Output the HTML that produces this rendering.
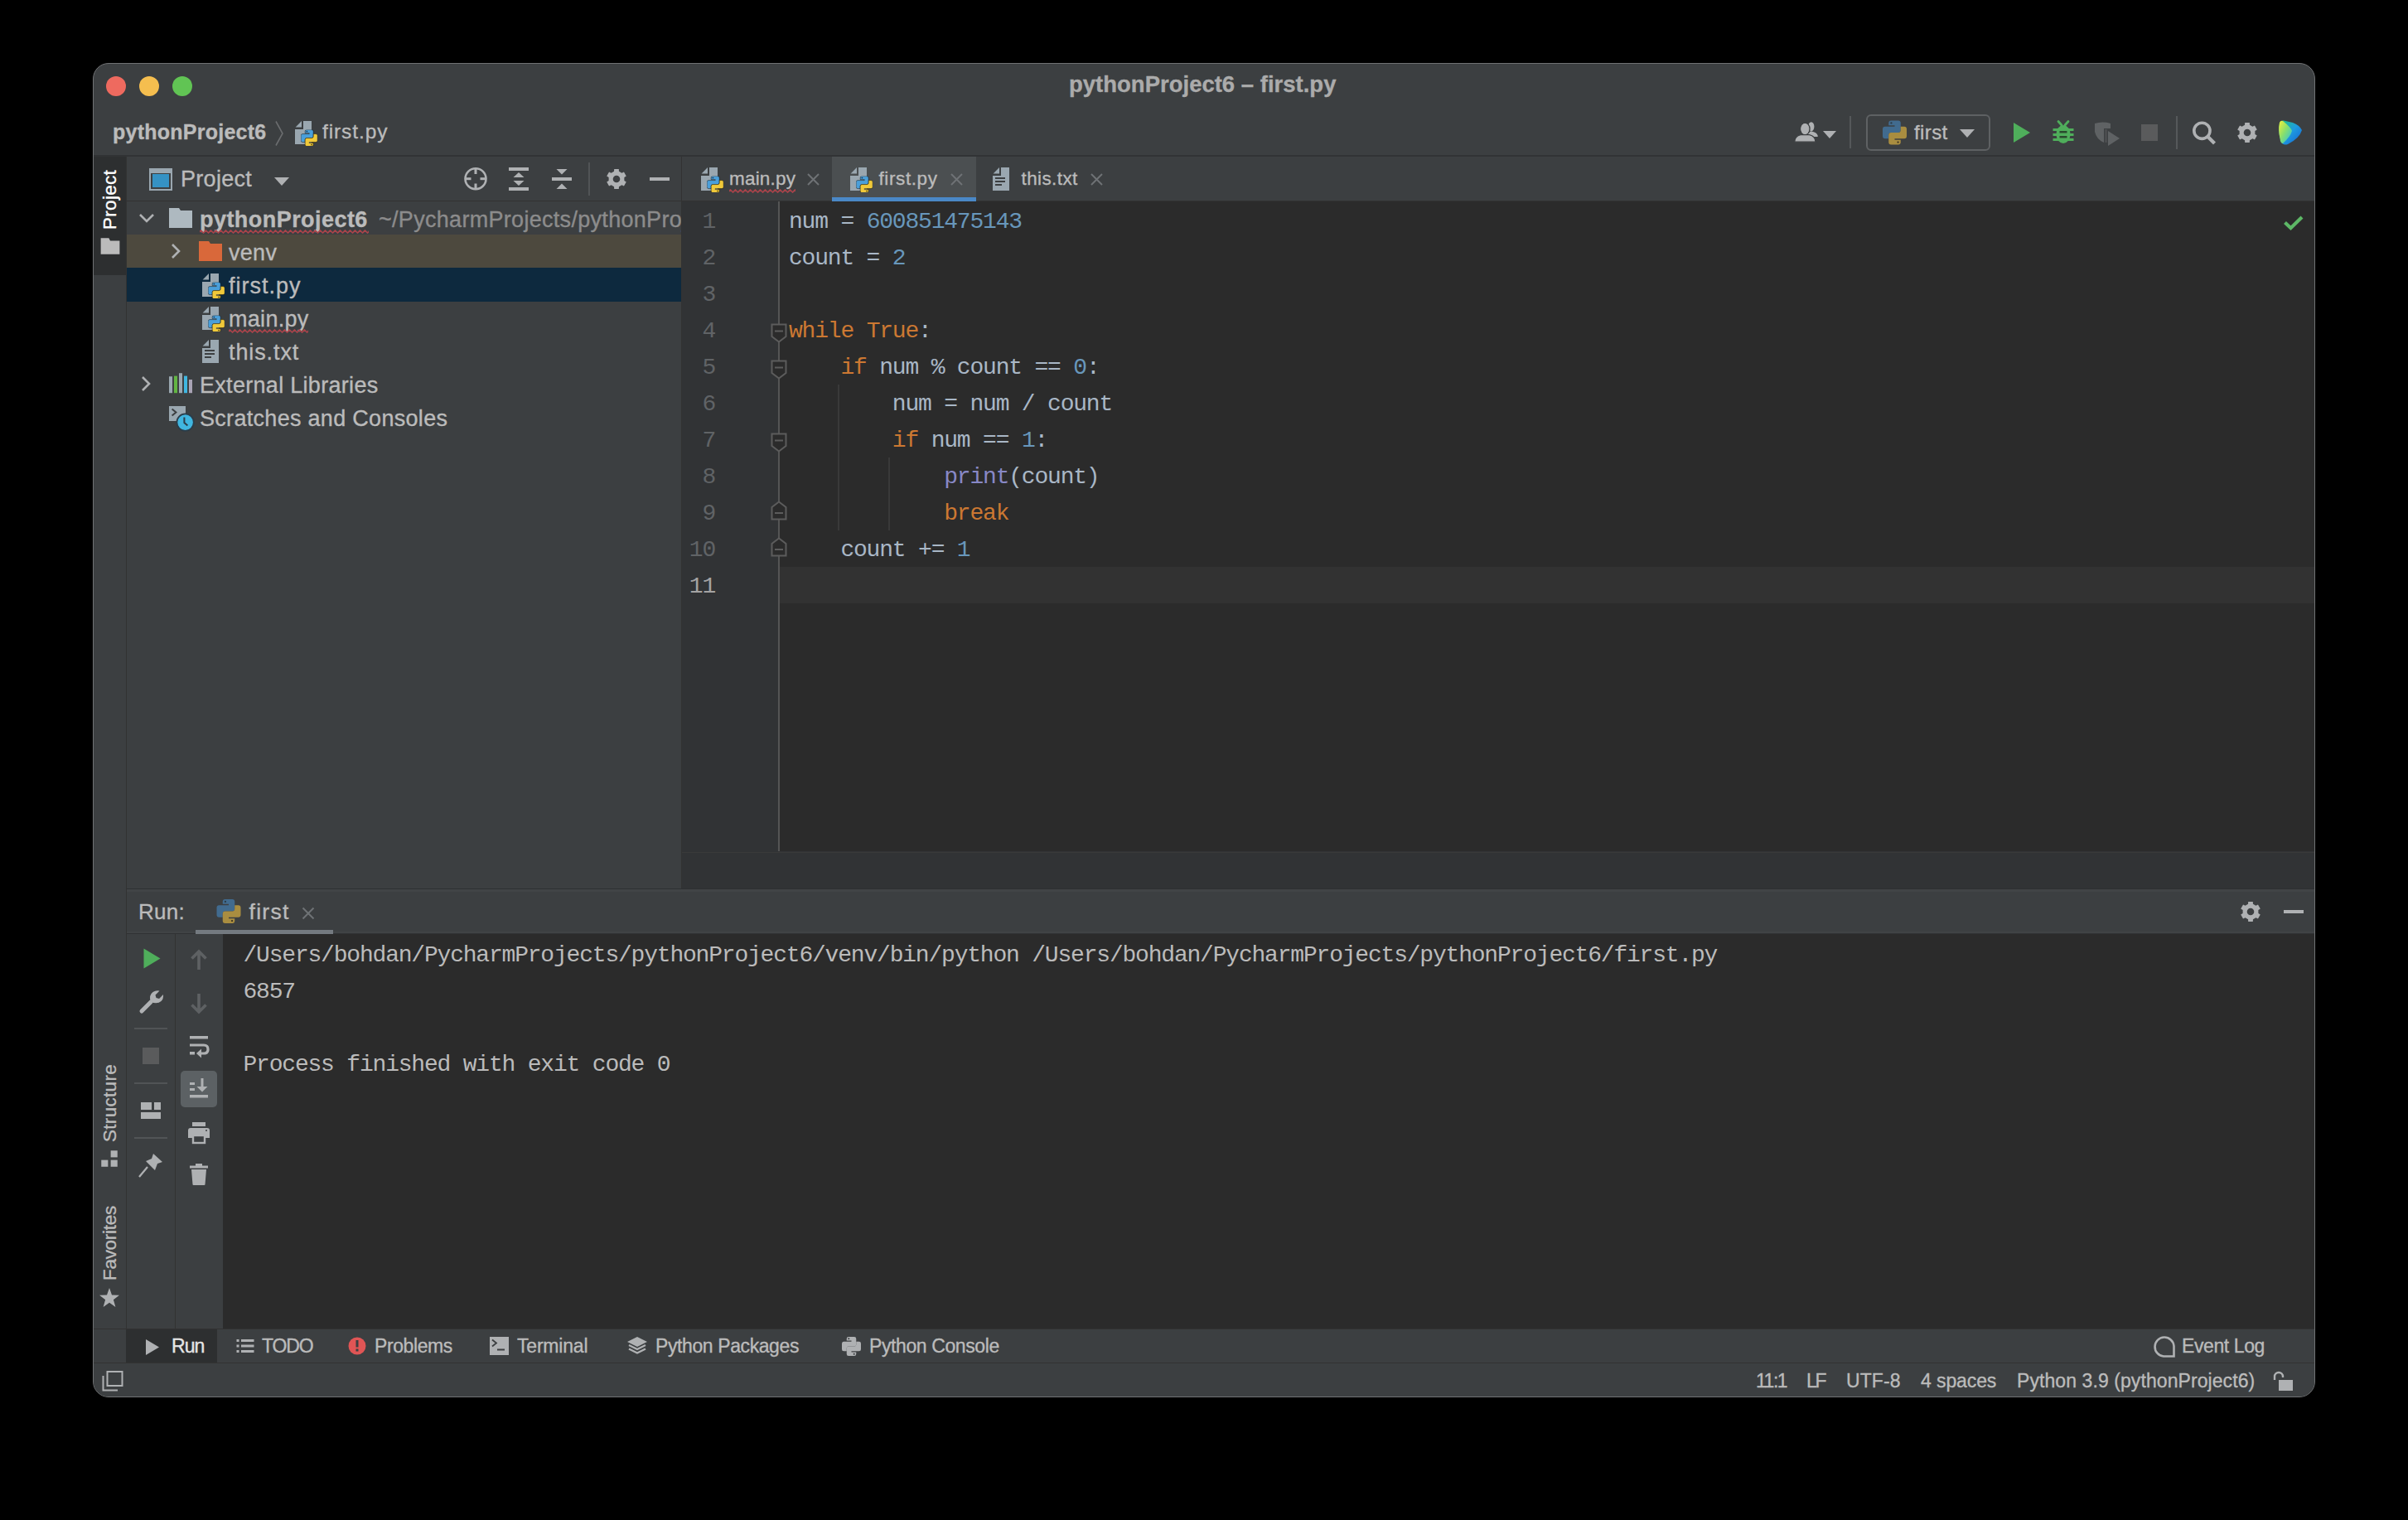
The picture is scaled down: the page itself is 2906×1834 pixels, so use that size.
<!DOCTYPE html>
<html><head><meta charset="utf-8">
<style>
*{box-sizing:border-box;margin:0;padding:0}
html,body{width:2906px;height:1834px;background:#000;overflow:hidden}
body{font-family:"Liberation Sans",sans-serif;color:#BBBBBB;position:relative}
.t{-webkit-text-stroke:0.35px currentColor}
.a{position:absolute}
.t{position:absolute;white-space:pre;line-height:1}
.m{position:absolute;white-space:pre;line-height:1;font-family:"Liberation Mono",monospace;font-size:26px}
#win{position:absolute;left:112px;top:76px;width:2682px;height:1610px;border-radius:19px;background:#3C3F41;overflow:hidden;border:1px solid #707274}
#pg{position:absolute;left:-113px;top:-77px;width:2906px;height:1834px}
svg{position:absolute;overflow:visible}
</style></head><body>
<svg width="0" height="0" style="position:absolute">
<defs>

<symbol id="fs" viewBox="0 0 20 24"><path d="M1.5,1.5 H18.5 V16 L10,22.5 L1.5,16 Z" fill="#2B2B2B" stroke="#5C5C5C" stroke-width="2"/><rect x="5" y="8.5" width="10" height="2" fill="#5C5C5C"/></symbol>
<symbol id="fe" viewBox="0 0 20 24"><path d="M1.5,22.5 H18.5 V8 L10,1.5 L1.5,8 Z" fill="#2B2B2B" stroke="#5C5C5C" stroke-width="2"/><rect x="5" y="14" width="10" height="2" fill="#5C5C5C"/></symbol>

<symbol id="gear" viewBox="0 0 32 32"><path fill="#AFB1B3" fill-rule="evenodd" d="M13.03,6.87 L13.19,4.02 L18.81,4.02 L18.97,6.87 L22.42,8.87 L24.97,7.58 L27.78,12.44 L25.39,14.00 L25.39,18.00 L27.78,19.56 L24.97,24.42 L22.42,23.13 L18.97,25.13 L18.81,27.98 L13.19,27.98 L13.03,25.13 L9.58,23.13 L7.03,24.42 L4.22,19.56 L6.61,18.00 L6.61,14.00 L4.22,12.44 L7.03,7.58 L9.58,8.87 Z M20.30,16.00 A4.3,4.3 0 1 0 11.70,16.00 A4.3,4.3 0 1 0 20.30,16.00 Z"/></symbol>

<symbol id="py" viewBox="0 0 10 10"><path fill="#4A9FDA" stroke="rgba(0,0,0,.45)" stroke-width=".5" d="M2.5,1 Q2.5,0 3.5,0 H6.5 Q7.5,0 7.5,1 V4 Q7.5,5 6.5,5 H3.5 Q2.5,5 2.5,6 V7.5 H1 Q0,7.5 0,6.5 V3.5 Q0,2.5 1,2.5 H5 V2 H2.5 Z"/><path fill="#F0C93A" stroke="rgba(0,0,0,.45)" stroke-width=".5" d="M7.5,9 Q7.5,10 6.5,10 H3.5 Q2.5,10 2.5,9 V6 Q2.5,5 3.5,5 H6.5 Q7.5,5 7.5,4 V2.5 H9 Q10,2.5 10,3.5 V6.5 Q10,7.5 9,7.5 H5 V8 H7.5 Z"/><circle cx="3.6" cy="1" r=".45" fill="#1d3b57"/><circle cx="6.4" cy="9" r=".45" fill="#5a4a10"/></symbol>
<symbol id="pyfile" viewBox="0 0 16 16"><path fill="#9AA7B0" d="M1.3,4.7 L5,1 V4.7 Z M6,1 H11 V15 H1 V6 H6 Z"/><use href="#py" x="4.6" y="6.3" width="10" height="10"/></symbol>
<symbol id="txtfile" viewBox="0 0 16 16"><path fill="#9AA7B0" d="M1.3,4.7 L5,1 V4.7 Z M6,1 H11 V15 H1 V6 H6 Z"/><rect x="2.5" y="7" width="6" height="1" fill="#3C3F41"/><rect x="2.5" y="9" width="6" height="1" fill="#3C3F41"/><rect x="2.5" y="11" width="4" height="1" fill="#3C3F41"/></symbol>
<symbol id="folder" viewBox="0 0 16 16"><path fill="#AEB9C0" d="M1,2 H7 L8,3.5 H15 V14 H1 Z"/></symbol>
<symbol id="folderO" viewBox="0 0 16 16"><path fill="#D9683A" d="M1,2 H7 L8,3.5 H15 V14 H1 Z"/></symbol>
<pattern id="wave" width="6" height="5" patternUnits="userSpaceOnUse"><path d="M-1.5,4 L1.5,1 L4.5,4 L7.5,1" stroke="#A8434A" fill="none" stroke-width="1.6"/></pattern>
<symbol id="chevR" viewBox="0 0 16 16"><path fill="none" stroke="#AFB1B3" stroke-width="1.3" d="M6,4 L10,8 L6,12"/></symbol>
<symbol id="chevD" viewBox="0 0 16 16"><path fill="none" stroke="#AFB1B3" stroke-width="1.3" d="M4,6 L8,10 L12,6"/></symbol>
</defs>
</svg>
<div id="win"><div id="pg">
<!-- nav bar bottom border -->
<div class="a" style="left:112px;top:187px;width:2684px;height:2px;background:#313335"></div>
<!-- left stripe -->
<div class="a" style="left:112px;top:189px;width:40px;height:1414px;background:#3C3F41"></div>
<div class="a" style="left:112px;top:189px;width:40px;height:143px;background:#2D2F30"></div>
<div class="a" style="left:152px;top:189px;width:1px;height:1414px;background:#323232"></div>
<!-- project panel -->
<div class="a" style="left:153px;top:189px;width:670px;height:883px;background:#3C3F41"></div>
<div class="a" style="left:153px;top:242px;width:670px;height:1px;background:#323232"></div>
<div class="a" style="left:153px;top:283px;width:670px;height:40px;background:#4D493E"></div>
<div class="a" style="left:153px;top:323px;width:670px;height:41px;background:#0D293E"></div>
<div class="a" style="left:822px;top:189px;width:1px;height:883px;background:#323232"></div>
<!-- editor tabs -->
<div class="a" style="left:823px;top:189px;width:1972px;height:54px;background:#3C3F41"></div>
<div class="a" style="left:1004px;top:189px;width:174px;height:54px;background:#4B4F51"></div>
<div class="a" style="left:1004px;top:238px;width:174px;height:5px;background:#4A88C7"></div>
<div class="a" style="left:823px;top:242px;width:181px;height:1px;background:#323232"></div>
<div class="a" style="left:1178px;top:242px;width:1617px;height:1px;background:#323232"></div>
<!-- editor -->
<div class="a" style="left:823px;top:243px;width:1972px;height:785px;background:#2B2B2B"></div>
<div class="a" style="left:823px;top:243px;width:117px;height:785px;background:#313335"></div>
<div class="a" style="left:940px;top:684px;width:1855px;height:44px;background:#323232"></div>
<div class="a" style="left:939px;top:243px;width:2px;height:785px;background:#555555"></div>
<!-- editor breadcrumbs strip -->
<div class="a" style="left:823px;top:1027px;width:1972px;height:45px;background:#313335"></div>
<div class="a" style="left:823px;top:1028px;width:1972px;height:1px;background:#3A3A3A"></div>
<!-- splitter -->
<div class="a" style="left:153px;top:1072px;width:2642px;height:1px;background:#2E3032"></div>
<div class="a" style="left:153px;top:1073px;width:2642px;height:3px;background:#414446"></div>
<!-- run panel header -->
<div class="a" style="left:153px;top:1076px;width:2642px;height:50px;background:#3C3F41"></div>
<div class="a" style="left:153px;top:1124px;width:2642px;height:2px;background:#404345"></div>
<div class="a" style="left:153px;top:1126px;width:2642px;height:1px;background:#303234"></div>
<div class="a" style="left:236px;top:1122px;width:166px;height:5px;background:#747A80"></div>
<!-- run toolbars -->
<div class="a" style="left:153px;top:1127px;width:116px;height:476px;background:#3C3F41"></div>
<div class="a" style="left:211px;top:1127px;width:1px;height:476px;background:#323232"></div>
<div class="a" style="left:269px;top:1127px;width:2526px;height:476px;background:#2B2B2B"></div>
<!-- bottom stripe -->
<div class="a" style="left:112px;top:1603px;width:2684px;height:1px;background:#323232"></div>
<div class="a" style="left:112px;top:1604px;width:2684px;height:40px;background:#3C3F41"></div>
<div class="a" style="left:152px;top:1604px;width:110px;height:40px;background:#2D2F30"></div>
<!-- status bar -->
<div class="a" style="left:112px;top:1644px;width:2684px;height:1px;background:#323232"></div>
<div class="a" style="left:112px;top:1645px;width:2684px;height:42px;background:#3C3F41"></div>

<div id="texts">

<!-- left stripe labels -->
<div class="t" style="left:122px;top:277px;font-size:22.5px;color:#FFFFFF;transform-origin:0 0;transform:rotate(-90deg);letter-spacing:0.3px">Project</div>
<svg style="left:120px;top:284px" width="26" height="26" viewBox="0 0 16 16"><path fill="#BBBBBB" d="M1,2 H7 L8,4 H15 V14 H1 Z"/></svg>
<div class="t" style="left:121.5px;top:1378px;font-size:22.5px;color:#BBBBBB;transform-origin:0 0;transform:rotate(-90deg);letter-spacing:0.3px">Structure</div>
<svg style="left:119px;top:1385px" width="26" height="26" viewBox="0 0 16 16"><rect x="9" y="2" width="5" height="5" fill="#AFB1B3"/><rect x="2" y="9" width="5" height="5" fill="#AFB1B3"/><rect x="9" y="9" width="5" height="5" fill="#AFB1B3"/></svg>
<div class="t" style="left:121.5px;top:1545px;font-size:22.5px;color:#BBBBBB;transform-origin:0 0;transform:rotate(-90deg);letter-spacing:-0.3px">Favorites</div>
<svg style="left:119px;top:1553px" width="26" height="26" viewBox="0 0 26 26"><path fill="#AFB1B3" d="M13,1 L16,9.5 L25,9.7 L17.9,15.2 L20.4,24 L13,18.8 L5.6,24 L8.1,15.2 L1,9.7 L10,9.5 Z"/></svg>
<!-- run header -->
<div class="t" style="left:167px;top:1087px;font-size:26px;letter-spacing:0.3px">Run:</div>
<svg style="left:261px;top:1085px" width="30" height="29" viewBox="0 0 10 10"><path fill="#416B8F" d="M2.5,1 Q2.5,0 3.5,0 H6.5 Q7.5,0 7.5,1 V4 Q7.5,5 6.5,5 H3.5 Q2.5,5 2.5,6 V7.5 H1 Q0,7.5 0,6.5 V3.5 Q0,2.5 1,2.5 H5 V2 H2.5 Z"/><path fill="#A98D40" d="M7.5,9 Q7.5,10 6.5,10 H3.5 Q2.5,10 2.5,9 V6 Q2.5,5 3.5,5 H6.5 Q7.5,5 7.5,4 V2.5 H9 Q10,2.5 10,3.5 V6.5 Q10,7.5 9,7.5 H5 V8 H7.5 Z"/><circle cx="3.6" cy="1" r=".4" fill="#2b3b48"/><circle cx="6.4" cy="9" r=".4" fill="#3a3220"/></svg>
<div class="t" style="left:300.5px;top:1087px;font-size:26.5px;letter-spacing:1.3px">first</div>
<svg style="left:364px;top:1094px" width="16" height="16" viewBox="0 0 16 16"><path d="M1.5,1.5 L14.5,14.5 M14.5,1.5 L1.5,14.5" stroke="#6E7275" stroke-width="2"/></svg>
<svg style="left:2700px;top:1084px" width="32" height="32"><use href="#gear"/></svg>
<div class="a" style="left:2756px;top:1098px;width:24px;height:4px;background:#AFB1B3"></div>
<!-- run toolbar col1 -->
<svg style="left:173px;top:1144px" width="21" height="25" viewBox="0 0 21 25"><path d="M0.5,0.5 L20.5,12.5 L0.5,24.5 Z" fill="#4FAE5B"/></svg>
<svg style="left:168px;top:1192px" width="30" height="32" viewBox="0 0 30 32"><path d="M3,28 L14,17" stroke="#AFB1B3" stroke-width="5" stroke-linecap="round"/><path d="M14,17 Q11,9 16.5,5 Q20,2.5 24.5,3.5 L19.5,8.5 L20.5,12 L24,13 L29,8 Q29.5,13 26.5,16 Q22,20 14,17 Z" fill="#AFB1B3"/></svg>
<div class="a" style="left:162px;top:1240px;width:40px;height:2px;background:#515456"></div>
<div class="a" style="left:172px;top:1264px;width:20px;height:20px;background:#5A5B5C"></div>
<div class="a" style="left:162px;top:1306px;width:40px;height:2px;background:#515456"></div>
<svg style="left:169px;top:1329px" width="26" height="22" viewBox="0 0 26 22"><rect x="1" y="1" width="13" height="9" fill="#AFB1B3"/><rect x="17" y="1" width="8" height="9" fill="#AFB1B3"/><rect x="1" y="13" width="24" height="8" fill="#AFB1B3"/></svg>
<div class="a" style="left:162px;top:1372px;width:40px;height:2px;background:#515456"></div>
<svg style="left:167px;top:1391px" width="30" height="30" viewBox="0 0 30 30"><path d="M1,29 L11,17" stroke="#AFB1B3" stroke-width="2.2"/><path d="M18,1 L29,11 L23,13 L20,21 L9,10 L16,7 Z" fill="#AFB1B3"/></svg>
<!-- run toolbar col2 -->
<svg style="left:227px;top:1145px" width="26" height="26" viewBox="0 0 26 26"><path d="M13,3 V25 M4.5,11.5 L13,3 L21.5,11.5" fill="none" stroke="#5E6163" stroke-width="3.6"/></svg>
<svg style="left:227px;top:1198px" width="26" height="26" viewBox="0 0 26 26"><path d="M13,1 V23 M4.5,14.5 L13,23 L21.5,14.5" fill="none" stroke="#5E6163" stroke-width="3.6"/></svg>
<svg style="left:227px;top:1249px" width="26" height="30" viewBox="0 0 26 30"><rect x="2" y="1" width="22" height="3.5" fill="#AFB1B3"/><rect x="2" y="20" width="6" height="3.5" fill="#AFB1B3"/><path d="M2,12 H19 Q24,12 24,17 Q24,22 19,22 H14" fill="none" stroke="#AFB1B3" stroke-width="3.2"/><path d="M16,16.5 L10,22 L16,27.5 Z" fill="#AFB1B3"/></svg>
<div class="a" style="left:218px;top:1292px;width:44px;height:44px;background:#5C6164;border-radius:5px"></div>
<svg style="left:227px;top:1300px" width="26" height="26" viewBox="0 0 26 26"><rect x="2" y="21" width="22" height="3.5" fill="#AFB1B3"/><rect x="2" y="6" width="6" height="3" fill="#AFB1B3"/><rect x="2" y="13" width="6" height="3" fill="#AFB1B3"/><path d="M17,1 V15" stroke="#AFB1B3" stroke-width="3"/><path d="M10.5,11 L17,17.5 L23.5,11 Z" fill="#AFB1B3"/></svg>
<svg style="left:226px;top:1353px" width="28" height="28" viewBox="0 0 28 28"><rect x="6" y="1" width="16" height="5" fill="#AFB1B3"/><path d="M1,11 Q1,8 4,8 H24 Q27,8 27,11 V20 H22 V16 H6 V20 H1 Z" fill="#AFB1B3"/><rect x="7" y="17" width="14" height="9" fill="none" stroke="#AFB1B3" stroke-width="2.4"/><circle cx="23" cy="11" r="1" fill="#3C3F41"/></svg>
<svg style="left:228px;top:1403px" width="24" height="28" viewBox="0 0 24 28"><rect x="1" y="3.5" width="22" height="3" fill="#AFB1B3"/><rect x="8" y="1" width="8" height="3" fill="#AFB1B3"/><path d="M3,8 H21 L19.5,26 Q19.5,27 18.5,27 H5.5 Q4.5,27 4.5,26 Z" fill="#AFB1B3"/></svg>
<!-- bottom stripe -->
<svg style="left:175px;top:1615px" width="18" height="21" viewBox="0 0 18 21"><path d="M1,1 L17,10.5 L1,20 Z" fill="#AFB1B3"/></svg>
<div class="t" style="left:207px;top:1612.5px;font-size:23px;letter-spacing:-0.9px;color:#E6E6E6">Run</div>
<svg style="left:285px;top:1615px" width="22" height="18" viewBox="0 0 22 18"><rect x="0.5" y="1" width="3" height="3" fill="#AFB1B3"/><rect x="0.5" y="7.5" width="3" height="3" fill="#AFB1B3"/><rect x="0.5" y="14" width="3" height="3" fill="#AFB1B3"/><rect x="6" y="1" width="15.5" height="3" fill="#AFB1B3"/><rect x="6" y="7.5" width="15.5" height="3" fill="#AFB1B3"/><rect x="6" y="14" width="15.5" height="3" fill="#AFB1B3"/></svg>
<div class="t" style="left:316px;top:1612.5px;font-size:23px;letter-spacing:-1.1px">TODO</div>
<svg style="left:420px;top:1613px" width="22" height="22" viewBox="0 0 22 22"><circle cx="11" cy="11" r="10.5" fill="#E05555"/><rect x="9.5" y="4" width="3" height="8.5" fill="#3C3F41"/><rect x="9.5" y="14.5" width="3" height="3" fill="#3C3F41"/></svg>
<div class="t" style="left:452px;top:1612.5px;font-size:23px;letter-spacing:-0.4px">Problems</div>
<svg style="left:591px;top:1613px" width="23" height="22" viewBox="0 0 23 22"><rect x="0" y="0" width="23" height="22" fill="#AFB1B3"/><path d="M3,3.5 L8,7.5 L3,11.5" fill="none" stroke="#3C3F41" stroke-width="1.8"/><rect x="9" y="14.5" width="9" height="2" fill="#3C3F41"/></svg>
<div class="t" style="left:624px;top:1612.5px;font-size:23px;letter-spacing:-0.2px">Terminal</div>
<svg style="left:756px;top:1612px" width="26" height="25" viewBox="0 0 26 25"><path d="M13,1 L25,7 L13,13 L1,7 Z" fill="#AFB1B3"/><path d="M3,11 L13,16 L23,11 M3,15.5 L13,20.5 L23,15.5" fill="none" stroke="#AFB1B3" stroke-width="2.4"/></svg>
<div class="t" style="left:791px;top:1612.5px;font-size:23px;letter-spacing:-0.4px">Python Packages</div>
<svg style="left:1016px;top:1613px" width="23" height="23" viewBox="0 0 10 10"><path fill="#AFB1B3" d="M2.5,1 Q2.5,0 3.5,0 H6.5 Q7.5,0 7.5,1 V4 Q7.5,5 6.5,5 H3.5 Q2.5,5 2.5,6 V7.5 H1 Q0,7.5 0,6.5 V3.5 Q0,2.5 1,2.5 H5 V2 H2.5 Z"/><path fill="#AFB1B3" d="M7.5,9 Q7.5,10 6.5,10 H3.5 Q2.5,10 2.5,9 V6 Q2.5,5 3.5,5 H6.5 Q7.5,5 7.5,4 V2.5 H9 Q10,2.5 10,3.5 V6.5 Q10,7.5 9,7.5 H5 V8 H7.5 Z"/><circle cx="3.6" cy="1" r=".45" fill="#3C3F41"/><circle cx="6.4" cy="9" r=".45" fill="#3C3F41"/></svg>
<div class="t" style="left:1049px;top:1612.5px;font-size:23px;letter-spacing:-0.4px">Python Console</div>
<svg style="left:2598px;top:1612px" width="27" height="26" viewBox="0 0 27 26"><path d="M25.5,24.5 H13 A11.5,11.5 0 1 1 25.5,12 Z" fill="none" stroke="#AFB1B3" stroke-width="2.6"/></svg>
<div class="t" style="left:2633px;top:1612.5px;font-size:23px;letter-spacing:-0.4px">Event Log</div>
<!-- status bar -->
<svg style="left:123px;top:1654px" width="26" height="25" viewBox="0 0 26 25"><rect x="6.5" y="1" width="18" height="17" fill="none" stroke="#AFB1B3" stroke-width="2"/><path d="M1.5,6 V23.5 H19" fill="none" stroke="#AFB1B3" stroke-width="2"/></svg>
<div class="t" style="left:2119px;top:1654.5px;font-size:23px;letter-spacing:-1.5px">11:1</div>
<div class="t" style="left:2180px;top:1654.5px;font-size:23px;letter-spacing:-2.2px">LF</div>
<div class="t" style="left:2228px;top:1654.5px;font-size:23px;letter-spacing:0.1px">UTF-8</div>
<div class="t" style="left:2318px;top:1654.5px;font-size:23px;letter-spacing:-0.1px">4 spaces</div>
<div class="t" style="left:2434px;top:1654.5px;font-size:23px;letter-spacing:0.08px">Python 3.9 (pythonProject6)</div>
<svg style="left:2742px;top:1654px" width="26" height="25" viewBox="0 0 26 25"><path d="M3,11 V7 A5,5 0 0 1 13,7 V8" fill="none" stroke="#AFB1B3" stroke-width="2.4"/><rect x="8" y="11" width="17" height="13" fill="#AFB1B3"/></svg>

<!-- title bar -->
<div class="a" style="left:127.7px;top:91.8px;width:24.4px;height:24.4px;border-radius:50%;background:#EE6A5F"></div>
<div class="a" style="left:167.8px;top:91.8px;width:24.4px;height:24.4px;border-radius:50%;background:#F5BE4F"></div>
<div class="a" style="left:207.8px;top:91.8px;width:24.4px;height:24.4px;border-radius:50%;background:#61C454"></div>
<div class="t" style="left:1290px;top:88.4px;font-size:27.5px;font-weight:bold;color:#ABABAB">pythonProject6 – first.py</div>
<!-- nav bar -->
<div class="t" style="left:136px;top:146.5px;font-size:25px;font-weight:bold;letter-spacing:0.25px">pythonProject6</div>
<svg style="left:330px;top:145px" width="14" height="32" viewBox="0 0 14 32"><path d="M3,1.5 L11,16 L3,30.5" fill="none" stroke="#6B6D6F" stroke-width="1.6"/></svg>
<svg style="left:354px;top:144px" width="32" height="32"><use href="#pyfile"/></svg>
<div class="t" style="left:389px;top:146.5px;font-size:24.5px;letter-spacing:0.9px">first.py</div>
<!-- toolbar right -->
<svg style="left:2164px;top:144px" width="32" height="32" viewBox="0 0 32 32"><ellipse cx="21.8" cy="8.8" rx="3.6" ry="5.6" fill="#AFB1B3"/><path d="M17,19.5 Q18,14.5 22,14.5 Q28.5,15.5 29.7,19.8 L29.7,21 L19,21 Z" fill="#AFB1B3"/><ellipse cx="14.3" cy="11.5" rx="5.6" ry="7.2" fill="#AFB1B3" stroke="#3C3F41" stroke-width="1.6"/><path d="M1.7,27.2 Q2,20 9,18.6 L19.6,18.6 Q26.6,20 27,27.2 Z" fill="#AFB1B3" stroke="#3C3F41" stroke-width="1.2"/><ellipse cx="14.3" cy="11.5" rx="5" ry="6.6" fill="#AFB1B3"/></svg>
<svg style="left:2200px;top:158px" width="16" height="9" viewBox="0 0 16 9"><path d="M0,0 H16 L8,9 Z" fill="#AFB1B3"/></svg>
<div class="a" style="left:2232px;top:140px;width:2px;height:39px;background:#55585A"></div>
<div class="a" style="left:2252px;top:138px;width:150px;height:44px;border:2.5px solid #5E6163;border-radius:6px"></div>
<svg style="left:2272px;top:145px" width="29" height="30" viewBox="0 0 10 10"><path fill="#416B8F" d="M2.5,1 Q2.5,0 3.5,0 H6.5 Q7.5,0 7.5,1 V4 Q7.5,5 6.5,5 H3.5 Q2.5,5 2.5,6 V7.5 H1 Q0,7.5 0,6.5 V3.5 Q0,2.5 1,2.5 H5 V2 H2.5 Z"/><path fill="#A98D40" d="M7.5,9 Q7.5,10 6.5,10 H3.5 Q2.5,10 2.5,9 V6 Q2.5,5 3.5,5 H6.5 Q7.5,5 7.5,4 V2.5 H9 Q10,2.5 10,3.5 V6.5 Q10,7.5 9,7.5 H5 V8 H7.5 Z"/><circle cx="3.6" cy="1" r=".4" fill="#2b3b48"/><circle cx="6.4" cy="9" r=".4" fill="#3a3220"/></svg>
<div class="t" style="left:2310px;top:147.5px;font-size:24px;letter-spacing:0.4px">first</div>
<svg style="left:2365px;top:156px" width="18" height="10" viewBox="0 0 18 10"><path d="M0,0 H18 L9,10 Z" fill="#AFB1B3"/></svg>
<svg style="left:2429px;top:147px" width="22" height="26" viewBox="0 0 22 26"><path d="M1,1 L21,13 L1,25 Z" fill="#4FAE5B"/></svg>
<svg style="left:2476px;top:145px" width="28" height="30" viewBox="0 0 28 30"><path d="M8,1.5 L12,6 M20,1.5 L16,6" stroke="#4FAE5B" stroke-width="2.8" stroke-linecap="round"/><ellipse cx="14" cy="17" rx="8.5" ry="11" fill="#4FAE5B"/><rect x="1.5" y="10" width="25" height="3" fill="#4FAE5B"/><rect x="1.5" y="16" width="25" height="3" fill="#4FAE5B"/><rect x="1.5" y="22" width="25" height="3" fill="#4FAE5B"/><rect x="9.5" y="13" width="9" height="2.5" fill="#2a4a2e"/><rect x="9.5" y="19" width="9" height="2.5" fill="#2a4a2e"/></svg>
<svg style="left:2527px;top:147px" width="32" height="30" viewBox="0 0 32 30"><path d="M1,2 Q10,-1 20,2 V8 H12 V25 Q3,21 1,12 Z" fill="#5F6264"/><path d="M17,11 L31,20 L17,29 Z" fill="#5F6264"/><rect x="13" y="9" width="3" height="16" fill="#4a4c4e"/></svg>
<div class="a" style="left:2584px;top:150px;width:20px;height:20px;background:#5A5B5C"></div>
<div class="a" style="left:2626px;top:140px;width:2px;height:40px;background:#55585A"></div>
<svg style="left:2644px;top:145px" width="32" height="32" viewBox="0 0 32 32"><circle cx="13.4" cy="12.8" r="9.6" fill="none" stroke="#AFB1B3" stroke-width="3.6"/><path d="M20,19.5 L28.5,28" stroke="#AFB1B3" stroke-width="4.2"/></svg>
<svg style="left:2696px;top:144px" width="32" height="32"><use href="#gear"/></svg>
<svg style="left:2749px;top:145px" width="30" height="31" viewBox="0 0 30 31"><defs><linearGradient id="cwm1" x1="0" y1="0" x2="1" y2="1"><stop offset="0" stop-color="#F5F03A"/><stop offset=".45" stop-color="#8BE06A"/><stop offset="1" stop-color="#20C0E8"/></linearGradient><linearGradient id="cwm2" x1="0" y1="0" x2="1" y2="1"><stop offset="0" stop-color="#22C77A"/><stop offset=".5" stop-color="#1E9BE0"/><stop offset="1" stop-color="#1560D0"/></linearGradient></defs><path d="M2,3 Q3,0 7,0.5 L18,3 Q26,6 29,12 Q26,22 12,29 Q6,31 4,26 Q0,16 2,3 Z" fill="url(#cwm2)"/><path d="M2,3 Q3,0 6,1 Q16,9 17,13 Q15,20 6,28 Q3,28 2.5,22 Q0,12 2,3 Z" fill="url(#cwm1)"/></svg>
<!-- project header icons -->
<svg style="left:558px;top:200px" width="32" height="32" viewBox="0 0 32 32"><circle cx="16" cy="15.7" r="12.5" fill="none" stroke="#AFB1B3" stroke-width="2.6"/><rect x="14.5" y="3" width="3" height="7" fill="#AFB1B3"/><rect x="14.5" y="21.5" width="3" height="7" fill="#AFB1B3"/><rect x="3.5" y="14.2" width="7" height="3" fill="#AFB1B3"/><rect x="21.5" y="14.2" width="7" height="3" fill="#AFB1B3"/></svg>
<svg style="left:610px;top:200px" width="32" height="32" viewBox="0 0 32 32"><rect x="4" y="2" width="24" height="4" fill="#AFB1B3"/><rect x="4" y="26" width="24" height="4" fill="#AFB1B3"/><path d="M9.5,14 L16,8 L22.5,14 Z M9.5,18 L16,24 L22.5,18 Z" fill="#AFB1B3"/></svg>
<svg style="left:662px;top:200px" width="32" height="32" viewBox="0 0 32 32"><rect x="4" y="14" width="24" height="4" fill="#AFB1B3"/><path d="M9.5,4 L16,10.5 L22.5,4 Z M9.5,28 L16,21.5 L22.5,28 Z" fill="#AFB1B3"/></svg>
<div class="a" style="left:710px;top:196px;width:2px;height:40px;background:#515456"></div>
<svg style="left:728px;top:200px" width="32" height="32"><use href="#gear"/></svg>
<div class="a" style="left:784px;top:214px;width:24px;height:4px;background:#AFB1B3"></div>
<!-- tabs -->
<svg style="left:844px;top:200px" width="32" height="32"><use href="#pyfile"/></svg>
<div class="t" style="left:880px;top:205.3px;font-size:22.5px;letter-spacing:0.2px">main.py</div>
<svg style="left:880px;top:227.5px" width="80" height="5"><rect width="80" height="5" fill="url(#wave)"/></svg>
<svg style="left:974px;top:209px" width="15" height="15" viewBox="0 0 15 15"><path d="M1,1 L14,14 M14,1 L1,14" stroke="#6E7275" stroke-width="2"/></svg>
<svg style="left:1024px;top:200px" width="32" height="32"><use href="#pyfile"/></svg>
<div class="t" style="left:1060.5px;top:205.3px;font-size:22.5px;letter-spacing:0.6px">first.py</div>
<svg style="left:1147px;top:209px" width="15" height="15" viewBox="0 0 15 15"><path d="M1,1 L14,14 M14,1 L1,14" stroke="#6E7275" stroke-width="2"/></svg>
<svg style="left:1196px;top:200px" width="32" height="32"><use href="#txtfile"/></svg>
<div class="t" style="left:1232.5px;top:205.3px;font-size:22.5px;letter-spacing:0.4px">this.txt</div>
<svg style="left:1316px;top:209px" width="15" height="15" viewBox="0 0 15 15"><path d="M1,1 L14,14 M14,1 L1,14" stroke="#6E7275" stroke-width="2"/></svg>
<!-- check mark -->
<svg style="left:2755px;top:259px" width="26" height="20" viewBox="0 0 26 20"><path d="M2.5,9.5 L9.5,16.2 L23,3" fill="none" stroke="#5DB866" stroke-width="4.2"/></svg>

<!-- project header -->
<svg style="left:180px;top:203px" width="28" height="27" viewBox="0 0 28 27"><rect x="1" y="1" width="26" height="25" fill="none" stroke="#9AA7B0" stroke-width="2"/><rect x="1" y="1" width="26" height="5" fill="#9AA7B0"/><rect x="4" y="7" width="20" height="16" fill="#3592C4"/></svg>
<div class="t" style="left:218px;top:203px;font-size:27px;letter-spacing:0.3px">Project</div>
<svg style="left:331px;top:214px" width="18" height="10" viewBox="0 0 18 10"><path d="M0,0 H18 L9,10 Z" fill="#AFB1B3"/></svg>
<!-- tree -->
<svg style="left:161px;top:247px" width="32" height="32"><use href="#chevD"/></svg>
<svg style="left:202px;top:247px" width="32" height="32"><use href="#folder"/></svg>
<div class="t" style="left:241px;top:252px;font-size:27px;font-weight:bold;letter-spacing:0.45px">pythonProject6</div>
<svg style="left:241px;top:277px" width="204" height="5"><rect width="204" height="5" fill="url(#wave)"/></svg>
<div class="a" style="left:457px;top:243px;width:365px;height:40px;overflow:hidden"><div class="t" style="left:0;top:9px;font-size:27px;letter-spacing:0.3px;color:#8C8C8C">~/PycharmProjects/pythonProject6</div></div>
<svg style="left:196px;top:287px" width="32" height="32"><use href="#chevR"/></svg>
<svg style="left:238px;top:287px" width="32" height="32"><use href="#folderO"/></svg>
<div class="t" style="left:276px;top:292px;font-size:27px;letter-spacing:0.3px">venv</div>
<svg style="left:242px;top:328px" width="32" height="32"><use href="#pyfile"/></svg>
<div class="t" style="left:276px;top:332px;font-size:27px;letter-spacing:1.0px">first.py</div>
<svg style="left:242px;top:368px" width="32" height="32"><use href="#pyfile"/></svg>
<div class="t" style="left:276px;top:372px;font-size:27px;letter-spacing:0.3px">main.py</div>
<svg style="left:276px;top:397px" width="96" height="5"><rect width="96" height="5" fill="url(#wave)"/></svg>
<svg style="left:242px;top:408px" width="32" height="32"><use href="#txtfile"/></svg>
<div class="t" style="left:276px;top:412px;font-size:27px;letter-spacing:0.9px">this.txt</div>
<svg style="left:160px;top:447px" width="32" height="32"><use href="#chevR"/></svg>
<svg style="left:202px;top:447px" width="32" height="32" viewBox="0 0 16 16"><rect x="1" y="3.6" width="2" height="10" fill="#9AA7B0"/><rect x="4" y="3.3" width="2" height="10.3" fill="#62B543"/><rect x="7" y="1.6" width="2" height="12" fill="#9AA7B0"/><rect x="10" y="3.3" width="2" height="10.3" fill="#40B6E0"/><rect x="13" y="5.5" width="2" height="8.1" fill="#A9A3B5"/></svg>
<div class="t" style="left:241px;top:452px;font-size:27px;letter-spacing:0.3px">External Libraries</div>
<svg style="left:202px;top:487px" width="32" height="32" viewBox="0 0 16 16"><rect x="1" y="1.5" width="10" height="9" fill="#9AA7B0"/><path d="M2.8,3.2 L5.2,5.2 L2.8,7.2" fill="none" stroke="#3C3F41" stroke-width="1"/><circle cx="10.8" cy="11.3" r="5.1" fill="#40B6E0" stroke="#2B3D4A" stroke-width="0.9"/><path d="M10.2,8.3 V11.5 L12.2,13.3" fill="none" stroke="#2B3D4A" stroke-width="1"/></svg>
<div class="t" style="left:241px;top:492px;font-size:27px;letter-spacing:0.3px">Scratches and Consoles</div>


<!-- fold markers & indent guides -->
<div class="a" style="left:1010.5px;top:464px;width:2px;height:176px;background:#393939"></div>
<div class="a" style="left:1071.5px;top:552px;width:2px;height:88px;background:#393939"></div>
<svg style="left:930px;top:390px" width="20" height="24"><use href="#fs"/></svg>
<svg style="left:930px;top:434px" width="20" height="24"><use href="#fs"/></svg>
<svg style="left:930px;top:522px" width="20" height="24"><use href="#fs"/></svg>
<svg style="left:930px;top:604px" width="20" height="24"><use href="#fe"/></svg>
<svg style="left:930px;top:648px" width="20" height="24"><use href="#fe"/></svg>
<!-- line numbers -->
<div class="a" style="left:823px;top:246px;width:40px;font-family:'Liberation Mono',monospace;font-size:28px;letter-spacing:-1.2px;line-height:44px;color:#606366;text-align:right;white-space:pre">1
2
3
4
5
6
7
8
9
10
<span style="color:#A4A3A3">11</span></div>
<!-- code -->
<div class="a" style="left:952px;top:246px;font-family:'Liberation Mono',monospace;font-size:28px;letter-spacing:-1.2px;line-height:44px;color:#A9B7C6;white-space:pre">num = <span style="color:#6897BB">600851475143</span>
count = <span style="color:#6897BB">2</span>

<span style="color:#CC7832">while</span> <span style="color:#CC7832">True</span>:
    <span style="color:#CC7832">if</span> num % count == <span style="color:#6897BB">0</span>:
        num = num / count
        <span style="color:#CC7832">if</span> num == <span style="color:#6897BB">1</span>:
            <span style="color:#8888C6">print</span>(count)
            <span style="color:#CC7832">break</span>
    count += <span style="color:#6897BB">1</span>
</div>
<!-- console -->
<div class="a" style="left:293.5px;top:1131px;font-family:'Liberation Mono',monospace;font-size:28px;letter-spacing:-1.2px;line-height:44px;color:#BBBBBB;white-space:pre">/Users/bohdan/PycharmProjects/pythonProject6/venv/bin/python /Users/bohdan/PycharmProjects/pythonProject6/first.py
6857

Process finished with exit code 0</div>
</div>
</div></div>
</body></html>
